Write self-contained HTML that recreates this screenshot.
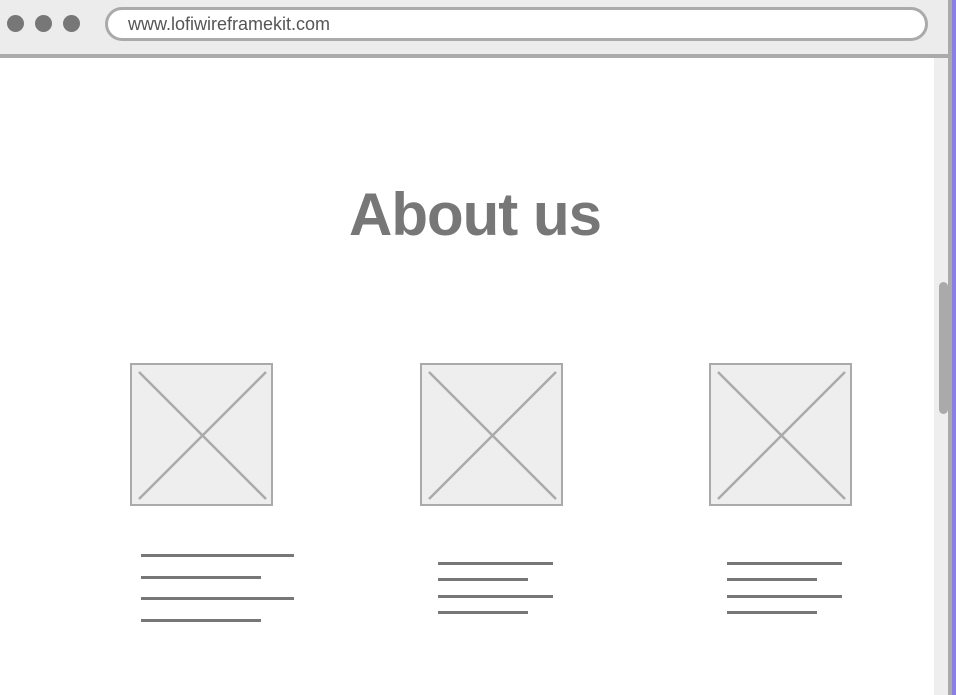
<!DOCTYPE html>
<html><head><style>
body{margin:0;width:956px;height:695px;background:#fff;position:relative;overflow:hidden;font-family:"Liberation Sans",sans-serif}
.hdr{position:absolute;left:0;top:0;width:948px;height:54px;background:#ececec;border-bottom:4px solid #aaa}
.dot{position:absolute;top:15px;width:17px;height:17px;border-radius:50%;background:#777}
.url{position:absolute;left:105px;top:7px;width:797px;height:28px;border:3px solid #aaa;border-radius:17px;background:#fff;font-family:"Comic Sans MS","Liberation Sans",sans-serif;font-size:18px;color:#555;line-height:28px;padding-left:20px;box-sizing:content-box}
.track{position:absolute;left:934px;top:58px;width:14px;height:637px;background:#eee}
.thumb{position:absolute;left:939px;top:282px;width:9px;height:132px;border-radius:5px;background:#aaa}
.edge{position:absolute;left:948px;top:0;width:4px;height:695px;background:#aaa}
.purp{position:absolute;left:952px;top:0;width:4px;height:695px;background:#8a7fe6}
h1{position:absolute;left:0;width:950px;top:179px;margin:0;text-align:center;font-size:60px;font-weight:bold;color:#777;letter-spacing:-1px;line-height:72px}
.img{position:absolute;top:363px;width:139px;height:139px;border:2px solid #aaa;background:#eee}
.ln{position:absolute;height:3px;background:#777}
</style></head><body>
<div class="hdr">
<div class="dot" style="left:7px"></div><div class="dot" style="left:35px"></div><div class="dot" style="left:63px"></div>
<div class="url">www.lofiwireframekit.com</div>
</div>
<div class="track"></div><div class="thumb"></div><div class="edge"></div><div class="purp"></div>
<h1>About us</h1>
<div class="img" style="left:130px"><svg width="139" height="139"><path d="M7 7L134 134M134 7L7 134" stroke="#aaa" stroke-width="2.5"/></svg></div>
<div class="img" style="left:420px"><svg width="139" height="139"><path d="M7 7L134 134M134 7L7 134" stroke="#aaa" stroke-width="2.5"/></svg></div>
<div class="img" style="left:709px"><svg width="139" height="139"><path d="M7 7L134 134M134 7L7 134" stroke="#aaa" stroke-width="2.5"/></svg></div>
<div class="ln" style="left:141px;top:554px;width:153px"></div>
<div class="ln" style="left:141px;top:576px;width:120px"></div>
<div class="ln" style="left:141px;top:597px;width:153px"></div>
<div class="ln" style="left:141px;top:619px;width:120px"></div>
<div class="ln" style="left:438px;top:562px;width:115px"></div>
<div class="ln" style="left:438px;top:578px;width:90px"></div>
<div class="ln" style="left:438px;top:595px;width:115px"></div>
<div class="ln" style="left:438px;top:611px;width:90px"></div>
<div class="ln" style="left:727px;top:562px;width:115px"></div>
<div class="ln" style="left:727px;top:578px;width:90px"></div>
<div class="ln" style="left:727px;top:595px;width:115px"></div>
<div class="ln" style="left:727px;top:611px;width:90px"></div>
</body></html>
